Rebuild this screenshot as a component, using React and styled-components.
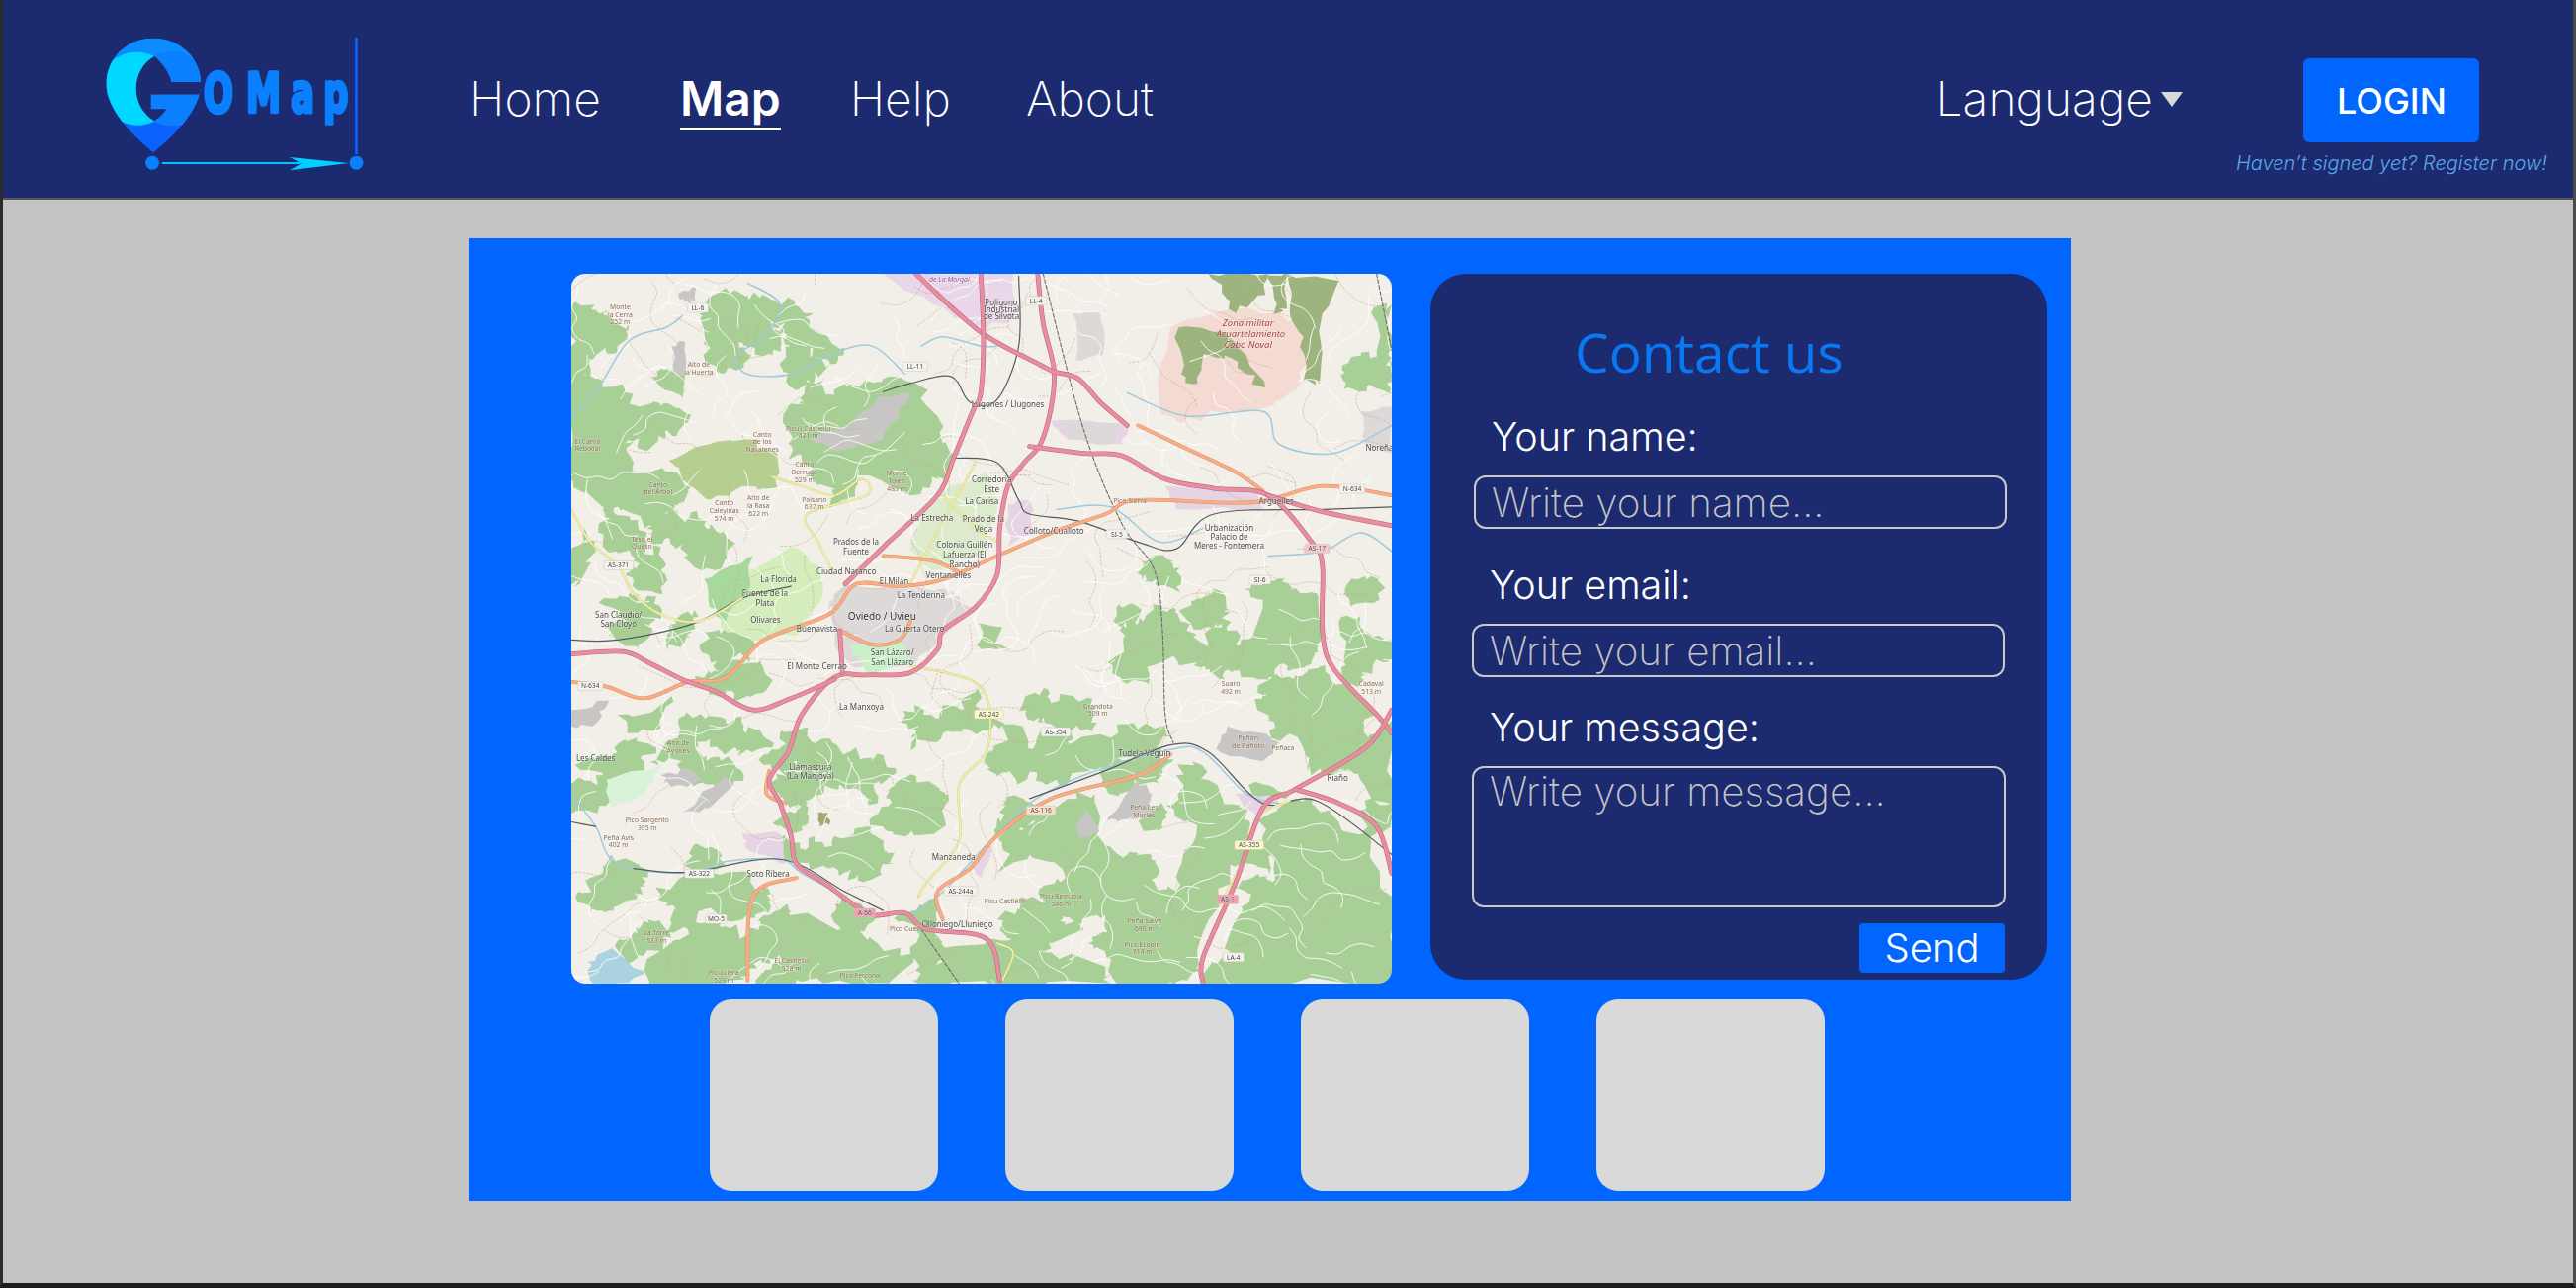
import styled, { createGlobalStyle } from 'styled-components';

const GlobalStyle = createGlobalStyle`
    html, body {
        margin: 0;
        padding: 0;
        background: #222;
    }

    * {
        box-sizing: border-box;
    }
`;

// map data is in the coordinates of a 1568 square crop, squeezed to 830x718 at draw time
const SX = 0.5486;
const SY = 0.4719;
const px = (x) => (x - 15) * SX;
const py = (y) => (y - 15) * SY;

function makeRandom(seed) {
    let s = seed;
    return () => {
        s = (s * 16807) % 2147483647;
        return s / 2147483647;
    };
}

// polygon with a rough natural edge
function rough(points, seed = 7, amount = 9) {
    const rnd = makeRandom(seed * 977 + 13);
    let d = '';
    for (let i = 0; i < points.length; i += 2) {
        const x = points[i];
        const y = points[i + 1];
        const nx = points[(i + 2) % points.length];
        const ny = points[(i + 3) % points.length];
        d += `${d ? 'L' : 'M'}${x} ${y}`;
        for (let k = 1; k < 4; k++) {
            const t = k / 4;
            d += `L${x + (nx - x) * t + (rnd() - 0.5) * amount * 2} ${y + (ny - y) * t + (rnd() - 0.5) * amount * 2}`;
        }
    }
    return d + 'Z';
}

// smooth line through the points
function smooth(p) {
    let d = `M${p[0]} ${p[1]}`;
    for (let i = 0; i < p.length - 2; i += 2) {
        const x0 = p[Math.max(i - 2, 0)];
        const y0 = p[Math.max(i - 1, 1)];
        const x1 = p[i];
        const y1 = p[i + 1];
        const x2 = p[i + 2];
        const y2 = p[i + 3];
        const x3 = p[Math.min(i + 4, p.length - 2)];
        const y3 = p[Math.min(i + 5, p.length - 1)];
        d += `C${x1 + (x2 - x0) / 6} ${y1 + (y2 - y0) / 6} ${x2 - (x3 - x1) / 6} ${y2 - (y3 - y1) / 6} ${x2} ${y2}`;
    }
    return d;
}

const GREENS = [
    [15,200,60,240,110,250,140,300,190,320,185,345,130,350,115,390,130,420,95,450,115,490,90,540,75,520,40,470,15,430],
    [40,110,60,95,90,110,120,135,100,170,60,190,15,215,15,170],
    [260,100,300,45,340,60,385,105,350,130,325,185,295,135,250,135],
    [410,170,450,165,485,215,465,235,430,265,405,225],
    [410,310,470,285,520,250,590,240,650,250,690,320,695,400,680,460,640,490,570,450,520,470,470,470,440,420,415,380],
    [120,440,190,440,210,490,180,540,150,560,110,520],
    [130,630,180,600,190,640,150,690,130,670],
    [320,780,360,790,345,850,320,830],
    [270,560,300,560,310,600,280,620],
    [15,610,40,560,60,610,30,680,15,680],
    [1490,100,1528,80,1528,220,1500,180],
    [1060,800,1110,760,1150,780,1190,830,1220,810,1260,840,1290,700,1330,720,1390,700,1400,790,1330,850,1270,880,1200,860,1130,840,1070,860],
    [1430,760,1470,750,1510,830,1480,870,1440,850],
    [1210,730,1230,740,1220,780,1200,770],
    [1300,900,1400,880,1450,900,1500,960,1440,1020,1370,1050,1320,980,1280,950],
    [765,760,790,770,825,820,790,820,770,800],
    [1020,730,1055,725,1060,780,1030,770],
    [890,930,940,920,960,970,930,1010,900,980],
    [640,1010,720,950,765,905,760,940,700,1000,650,1030],
    [790,1030,830,980,870,1040,850,1070,800,1060],
    [920,1030,1010,1010,1040,980,1090,990,1130,1000,1060,1050,980,1080,900,1090,870,1070],
    [850,1200,930,1140,980,1130,1000,1240,1040,1260,1090,1320,1130,1340,1140,1280,1170,1190,1130,1090,1160,1060,1190,1100,1240,1180,1230,1280,1190,1400,1150,1530,1020,1536,1000,1390,950,1380,920,1290,860,1260,800,1300],
    [1290,1180,1380,1150,1430,1190,1490,1230,1528,1350,1528,1536,1250,1536,1220,1460,1270,1340,1310,1290,1290,1220],
    [1400,1000,1440,1010,1450,1070,1400,1090,1370,1080],
    [1470,1030,1528,980,1528,1170,1470,1100],
    [620,1150,680,1140,710,1130,690,1210,630,1220],
    [480,1060,540,1030,570,1100,580,1150,520,1120,480,1110],
    [500,1220,560,1200,590,1240,610,1280,540,1310,510,1280],
    [450,1100,490,1090,480,1130,440,1140],
    [160,1060,210,1010,250,1030,260,1060,190,1060],
    [240,980,300,970,320,1040,270,1030],
    [60,1090,110,1040,150,1060,100,1120,60,1160],
    [50,1310,110,1290,140,1330,100,1370,50,1380],
    [170,1330,280,1300,340,1300,360,1340,330,1400,250,1380,190,1370],
    [160,1480,260,1410,320,1410,345,1520,300,1536,160,1536],
    [420,1390,540,1420,580,1450,650,1470,600,1536,480,1536,400,1510,370,1400],
    [700,1460,790,1440,900,1470,1000,1500,1010,1536,680,1536],
    [800,1400,860,1370,900,1400,960,1420,900,1450,820,1440],
    [100,960,170,950,200,920,180,990,110,1000],
    [300,860,330,890,290,910,260,880],
];

// zones where the countryside is wooded: x0, y0, x1, y1, how many small woods
const WOOD_ZONES = [
    [15,100,200,560,16],[250,40,500,240,10],[410,280,700,480,8],[100,560,300,800,10],[230,780,400,920,5],
    [15,950,350,1130,9],[15,1280,380,1536,14],[400,1020,620,1320,14],[380,1380,700,1536,8],[620,1130,720,1220,2],
    [650,940,780,1020,3],[780,1000,880,1070,2],[860,940,960,1010,2],[1040,720,1300,900,14],[1290,680,1520,1020,14],
    [1370,980,1528,1120,5],[800,1130,1528,1536,40],[880,1000,1130,1090,5],[1450,90,1528,230,2],[1060,630,1180,720,2],
];

function makeWoods() {
    const rnd = makeRandom(2024);
    const woods = [];
    WOOD_ZONES.forEach(([x0, y0, x1, y1, count]) => {
        for (let i = 0; i < count; i++) {
            const cx = x0 + rnd() * (x1 - x0);
            const cy = y0 + rnd() * (y1 - y0);
            const pts = [];
            const n = 6;
            for (let k = 0; k < n; k++) {
                const a = (k / n) * 6.283;
                const r = 16 + rnd() * 38;
                pts.push(cx + Math.cos(a) * r, cy + Math.sin(a) * r);
            }
            woods.push(pts);
        }
    });
    return woods;
}

const WOODS = makeWoods();

const PATCHES = [
    { fill: '#f3dbd4', points: [1100,300,1120,130,1240,90,1300,100,1380,120,1370,210,1340,270,1300,300,1200,310,1140,335] },
    { fill: '#9db47f', points: [1190,15,1300,15,1295,60,1240,100,1225,70] },
    { fill: '#9db47f', points: [1135,130,1220,140,1260,190,1295,260,1260,230,1220,190,1180,190,1170,250,1140,230] },
    { fill: '#9db47f', points: [1335,15,1430,30,1400,100,1395,250,1365,245,1365,150,1340,100] },
    { fill: '#9db47f', points: [1300,25,1335,15,1335,90,1310,100] },
    { fill: '#b7ce91', points: [195,415,270,380,335,370,395,400,395,475,330,470,270,500,225,460] },
    { fill: '#e9d6e8', points: [590,15,830,15,830,110,760,130,680,80] },
];

const OVERLAYS = [
    { fill: '#e6d3e3', points: [1110,470,1270,480,1290,520,1130,520] },
    { fill: '#e6d3e3', points: [900,330,1040,340,1030,380,930,370] },
    { fill: '#e6d3e3', points: [820,510,860,500,870,570,820,600] },
    { fill: '#e6d3e3', points: [750,1290,790,1240,770,1310] },
    { fill: '#e6d3e3', points: [330,1215,400,1215,410,1280,340,1250] },
    { fill: '#e6d3e3', points: [1240,1130,1320,1140,1280,1180] },
    { fill: '#ddd9d9', points: [490,720,520,680,620,690,700,690,760,730,700,790,650,850,540,860,500,810] },
    { fill: '#d5ecbb', points: [270,700,420,600,470,640,480,700,430,790,350,800,290,770] },
    { fill: '#c9f0c9', points: [530,810,620,800,650,850,560,870] },
    { fill: '#dcebcb', points: [700,480,780,440,800,520,780,610,680,650,640,610,660,540] },
    { fill: '#a8d99c', points: [260,670,310,640,350,620,340,700,300,760,270,730] },
    { fill: '#d8f3d8', points: [80,1100,180,1070,150,1130,90,1160] },
    { fill: '#ddd9d9', points: [940,100,990,95,995,190,945,200] },
    { fill: '#ddd9d9', points: [920,335,1030,335,1010,380,930,370] },
    { fill: '#ddd9d9', points: [1470,310,1528,300,1528,400,1480,380] },
    { fill: '#c8c6c4', points: [455,370,530,340,580,280,640,270,620,310,590,370,510,395] },
    { fill: '#c8c6c4', points: [200,170,225,160,225,235,205,230] },
    { fill: '#c8c6c4', points: [215,55,245,45,245,75,220,75] },
    { fill: '#c8c6c4', points: [15,950,85,930,60,980,15,985] },
    { fill: '#c8c6c4', points: [180,1090,230,1075,255,1100,200,1115] },
    { fill: '#c8c6c4', points: [220,1170,300,1090,315,1110,270,1160] },
    { fill: '#c8c6c4', points: [1205,1030,1225,985,1290,1000,1320,1020,1290,1060,1210,1040] },
    { fill: '#c8c6c4', points: [1005,1180,1060,1100,1085,1130,1085,1170,1020,1190] },
    { fill: '#c8c6c4', points: [945,1195,965,1160,990,1210,950,1225] },
    { fill: '#aad3df', points: [45,1490,90,1460,150,1510,120,1535,55,1536] },
    { fill: '#a9a67a', points: [470,1170,490,1170,490,1198,472,1198] },
];

const RIVERS = [
    [340,35,400,80,370,150,320,190,340,230,420,230,500,185,570,170,630,230],
    [15,320,60,270,120,160,190,130,220,105],
    [660,170,700,150,770,170,800,170],
    [910,520,1010,515,1100,590,1180,560],
    [1040,270,1150,320,1290,310,1320,380,1420,400,1528,340],
    [15,1130,60,1200,100,1280,230,1300,300,1275,400,1270,440,1300,510,1345],
    [1300,620,1400,610,1470,570,1528,610],
    [640,1390,700,1340,780,1240,860,1150,960,1090,1120,1035,1180,1040,1260,1130,1320,1150],
];

const MINOR_YELLOW = [
    [385,450,440,470,500,490,550,455,560,490,450,530,470,590,500,660],
    [15,520,50,590,100,640,130,700,180,745,250,760,330,710],
    [640,855,750,885,785,940,780,1040,730,1110,730,1230,670,1320,655,1350],
    [1340,1145,1280,1180,1250,1280,1210,1370],
    [700,490,760,560,800,590],
    [640,680,680,590,760,420],
    [800,1450,830,1470,810,1530],
];

const ORANGE = [
    [15,890,80,900,150,925,230,890,300,880,370,800,490,745,540,680,620,685,700,670,800,620,900,570,1000,530,1060,500,1270,505,1400,470,1528,490],
    [1060,340,1150,390,1240,440,1290,480],
    [1120,1045,1060,1090,900,1140,800,1220,750,1290,690,1340,700,1400],
    [430,1310,350,1350,340,1530],
    [380,1080,375,1130,410,1150],
    [510,780,570,810,620,800,640,760],
    [590,620,680,630,740,660],
];

const MOTORWAYS = [
    [875,15,885,120,905,220,900,300,880,380,850,420,820,470,805,560,800,660,760,730,700,780,690,820,640,870,560,875,500,880,440,960,415,1040,380,1100,400,1150,420,1220,430,1280,480,1320,540,1370,575,1390,630,1385,670,1420,780,1440,805,1530],
    [650,15,770,140,880,210,905,225,950,240,990,290,1040,340],
    [770,15,775,150,770,270,755,310,720,410,690,490,600,590,520,680],
    [860,385,960,400,1030,405,1110,455,1200,475,1300,490,1380,590,1400,640,1400,780,1420,860,1500,960,1528,1000],
    [15,830,110,825,160,850,220,885,280,910,350,950,420,925,500,885],
    [1528,950,1480,1030,1350,1120,1290,1160,1240,1320,1180,1480,1180,1536],
    [1350,1120,1430,1150,1500,1200,1528,1300],
    [1300,490,1400,525,1528,555],
    [510,780,515,870],
];

const RAILS = [
    [15,800,100,800,240,765,330,710,420,685],
    [590,268,640,250,715,235,750,290,800,285,840,170,840,20],
    [720,410,800,420,840,500,860,530,950,545,1060,590,1130,605,1200,530,1400,520,1528,515],
    [15,1190,60,1200],
    [860,1140,1000,1080,1120,1025,1190,1040,1290,1150,1390,1145,1528,1260],
    [130,1290,230,1298,400,1270,520,1340,590,1380],
];

const TRACKS = [
    [885,15,960,350,1030,550,1090,650,1105,780,1110,960,1125,1020],
    [1500,15,1528,180],
    [660,1420,730,1536],
];

const TOWNS = [
    ['Corredoria',790,455],['Este',790,477],['La Carisa',772,503],['La Estrecha',680,538],['Prado de la',775,540],['Vega',775,561],
    ['Colloto/Cualloto',905,565],['Urbanización',1228,560],['Palacio de',1228,579],['Meres - Fontemera',1228,598],['Prados de la',540,590],
    ['Fuente',540,611],['Colonia Guillén',740,595],['Lafuerza (El',740,616],['Rancho)',740,637],['Ciudad Naranco',522,653],['La Florida',397,669],
    ['El Milán',610,675],['Ventanielles',710,661],['Fuente de la',372,699],['Plata',372,720],['La Tenderina',660,704],['Olivares',373,756],
    ['Buenavista',468,775],['La Guerta Otero',648,776],['San Claudio/',102,747],['San Cloyo',102,766],['San Lázaro/',607,827],['San Llázaro',607,847],
    ['El Monte Cerrao',468,856],['La Manxoya',550,943],['Les Caldes',60,1054],['Llamascura',456,1073],['(La Manjoya)',456,1092],['Tudela Veguín',1072,1042],
    ['Riaño',1428,1095],['Soto Ribera',378,1302],['Manzaneda',720,1266],['Olloniego/Lluniego',727,1410],['Lugones / Llugones',820,295],['Noreña',1505,388],
    ['Argüelles',1315,503],['Polígono',808,77],['Industrial',808,92],['de Silvota',808,107],
];

const PEAKS = [
    ['Monte',105,87],['la Cerra',105,103],['252 m',105,119],['Alto de',250,210],['la Huerta',250,226],['Picu\'l Castiellu',452,347],['421 m',452,363],
    ['Canto',367,360],['de los',367,376],['Navalones',367,392],['Canto',175,468],['del Árbol',175,484],['Canto',445,425],['Berruga',445,441],['529 m',445,458],
    ['Monte',615,444],['Toleo',615,460],['489 m',615,476],['Paisano',463,500],['637 m',463,516],['Alto de',360,497],['la Rasa',360,513],['622 m',360,530],
    ['Canto',297,507],['Caleyinas',297,523],['574 m',297,540],['Teso el',145,584],['Queso',145,600],['Alto de',212,1022],['Ayones',212,1038],
    ['Pico Sargento',155,1187],['395 m',155,1203],['Peña Avis',102,1224],['402 m',102,1240],['La Torre',172,1428],['533 m',172,1445],['Picu Llera',296,1514],
    ['529 m',296,1530],['El Castiellu',421,1488],['528 m',421,1505],['Pico Fercona',547,1520],['Picu Castiello',815,1361],['Picu Berrubia',918,1351],
    ['546 m',918,1367],['Pico Cuelo',632,1419],['Peña Salve',1072,1403],['690 m',1072,1419],['Pico Ecobin',1068,1453],['714 m',1068,1469],['Peña Les',1071,1160],
    ['Muries',1071,1176],['Peñón',1263,1012],['de Bañoto',1263,1028],['Peñaca',1327,1032],['Suaro',1231,895],['492 m',1231,911],['Cadaval',1490,895],
    ['513 m',1490,911],['Grandota',986,943],['509 m',986,959],['Pico Sierra',1045,502],['El Canto',45,375],['Rebollal',45,391],
];

const SHIELDS = [
    ['LL-6',248,88],['LL-4',872,73],['LL-11',649,214],['AS-371',102,640],['N-634',50,899],['N-634',1455,476],['SI-5',1021,573],['SI-6',1285,671],
    ['AS-17',1390,604,'#f4c6cd'],['AS-242',785,959,'#fbf7c4'],['AS-354',908,997],['AS-116',881,1165,'#fbdcc4'],['AS-322',251,1301],['AS-244a',733,1338],
    ['A-66',556,1385,'#eea0ae'],['MO-5',282,1398],['AS-355',1265,1240,'#fbf7c4'],['AS-1',1225,1356,'#eea0ae'],['LA-4',1236,1480],
];

// white lanes and brown paths scattered over the countryside
function scatterLines(count, seed, step) {
    const rnd = makeRandom(seed);
    const lines = [];
    for (let i = 0; i < count; i++) {
        let x = 15 + rnd() * 1513;
        let y = 15 + rnd() * 1521;
        let a = rnd() * 6.28;
        const pts = [x, y];
        const n = 3 + Math.floor(rnd() * 5);
        for (let k = 0; k < n; k++) {
            a += (rnd() - 0.5) * 1.8;
            x += Math.cos(a) * step;
            y += Math.sin(a) * step;
            pts.push(x, y);
        }
        lines.push(smooth(pts));
    }
    return lines;
}

const LANES = scatterLines(280, 4242, 24);
const PATHS = scatterLines(130, 99, 30);

function MapArt() {
    return (
        <MapSvg viewBox="0 0 830 718" aria-label="Map of Oviedo">
            <rect width="830" height="718" fill="#f2efe9" />
            <g transform={`scale(${SX} ${SY}) translate(-15 -15)`}>
                {PATCHES.map((p, i) => <path key={i} d={rough(p.points, i + 1)} fill={p.fill} />)}
                {GREENS.map((g, i) => <path key={i} d={rough(g, i + 30, 13)} fill="#a8d096" />)}
                {WOODS.map((g, i) => <path key={i} d={rough(g, i + 200, 8)} fill="#a8d096" />)}
                {OVERLAYS.map((p, i) => <path key={i} d={rough(p.points, i + 70, 6)} fill={p.fill} />)}
                {PATHS.map((d, i) => <Line key={i} d={d} $color="#c9a98a" $width={0.6} $dash="2 2" />)}
                {LANES.map((d, i) => <Line key={i} d={d} $color="#ffffff" $width={0.9} />)}
                {RIVERS.map((r, i) => <Line key={i} d={smooth(r)} $color="#9fc9df" $width={1.5} />)}
                {RAILS.map((r, i) => <Line key={i} d={smooth(r)} $color="#555b60" $width={1.2} />)}
                {TRACKS.map((r, i) => <Line key={i} d={smooth(r)} $color="#6b6b6b" $width={1.1} $dash="4 2" />)}
                {MINOR_YELLOW.map((r, i) => (
                    <g key={i}>
                        <Line d={smooth(r)} $color="#c9c47f" $width={2.2} />
                        <Line d={smooth(r)} $color="#f7f5a8" $width={1.4} />
                    </g>
                ))}
                {ORANGE.map((r, i) => (
                    <g key={i}>
                        <Line d={smooth(r)} $color="#d98a5f" $width={3.8} />
                        <Line d={smooth(r)} $color="#f7ae86" $width={3} />
                    </g>
                ))}
                {MOTORWAYS.map((r, i) => (
                    <g key={i}>
                        <Line d={smooth(r)} $color="#bd6478" $width={4.8} />
                        <Line d={smooth(r)} $color="#e78fa1" $width={3.7} />
                    </g>
                ))}
            </g>
            {SHIELDS.map(([t, x, y, fill]) => {
                const w = t.length * 4.1 + 5;
                return (
                    <g key={t + x}>
                        <rect x={px(x) - w / 2} y={py(y) - 4.5} width={w} height={9} rx="1.5" fill={fill || '#f4f2ec'} stroke="#c9c5b8" strokeWidth="0.5" />
                        <MapText x={px(x)} y={py(y) + 2.3} $size={6.6} $color="#444">{t}</MapText>
                    </g>
                );
            })}
            {PEAKS.map(([t, x, y]) => <MapText key={t + x + y} x={px(x)} y={py(y) + 2} $size={6.8} $color="#8a6a52">{t}</MapText>)}
            {TOWNS.map(([t, x, y]) => <MapText key={t + x + y} x={px(x)} y={py(y) + 3} $size={8} $color="#4a4a4a">{t}</MapText>)}
            <MapText x={px(588)} y={py(750) + 3.5} $size={10} $color="#333">Oviedo / Uvieu</MapText>
            <MapText x={px(1263)} y={py(120) + 3} $size={9.5} $color="#a5423f" $italic>Zona militar</MapText>
            <MapText x={px(1263)} y={py(144) + 3} $size={9.5} $color="#a5423f" $italic>- Acuartelamiento</MapText>
            <MapText x={px(1263)} y={py(168) + 3} $size={9.5} $color="#a5423f" $italic>Cabo Noval</MapText>
            <MapText x={px(712)} y={py(28) + 2} $size={7} $color="#8a5a96" $italic>de La Morgal</MapText>
        </MapSvg>
    );
}

function Logo() {
    const pin = 'M465 465C405 415 322 335 322 255C322 178 385 117 465 117C545 117 610 178 610 255C610 335 525 415 465 465Z';

    return (
        <LogoSvg viewBox="300 100 820 430" aria-label="GoMap">
            <defs>
                <clipPath id="pin-clip"><path d={pin} /></clipPath>
            </defs>
            <path d={pin} fill="#0a63ff" />
            <g clipPath="url(#pin-clip)">
                <path d="M300 100H640V340C590 385 510 395 468 370C420 395 345 380 300 310Z" fill="#0a80ff" />
                <path d="M320 200C360 150 420 145 468 172C510 145 565 150 600 195L600 100L320 100Z" fill="#0b8dff" />
                <path d="M300 240C330 165 410 140 468 172C395 215 395 325 468 368C425 395 350 385 300 310Z" fill="#00d7ff" />
                <path d="M468 172C395 215 395 325 468 368C485 358 497 345 505 332L458 332L458 288L612 288L612 250L520 250C512 218 492 192 468 172Z" fill="#1c2a70" />
            </g>
            <LogoWord transform="scale(0.64 1)" x="966 1168 1381 1536" y="342">OMap</LogoWord>
            <rect x="1079" y="115" width="8" height="355" fill="#0a66ff" />
            <circle cx="462" cy="496" r="21" fill="#0a80ff" />
            <circle cx="1083" cy="496" r="21" fill="#0a80ff" />
            <rect x="492" y="494" width="420" height="6" fill="#00c8ff" />
            <path d="M880 479L1060 497L880 519L916 498Z" fill="#00d0ff" />
        </LogoSvg>
    );
}

export default function App() {
    return (
        <>
            <GlobalStyle />
            <Frame>
                <Header>
                    <Logo />
                    <Nav>
                        <NavLink>Home</NavLink>
                        <NavLink $active $gap={80}>Map</NavLink>
                        <NavLink $gap={70}>Help</NavLink>
                        <NavLink $gap={76}>About</NavLink>
                    </Nav>
                    <Language>
                        Language
                        <Caret />
                    </Language>
                    <Account>
                        <LoginButton>LOGIN</LoginButton>
                        <SignUp>Haven’t signed yet? Register now!</SignUp>
                    </Account>
                </Header>

                <Main>
                    <Panel>
                        <TopRow>
                            <MapCard>
                                <MapArt />
                            </MapCard>

                            <ContactCard>
                                <ContactTitle>Contact us</ContactTitle>
                                <FieldLabel $top={31} $left={62}>Your name:</FieldLabel>
                                <TextInput $left={44} placeholder="Write your name..." />
                                <FieldLabel $top={35} $left={60}>Your email:</FieldLabel>
                                <TextInput $left={42} placeholder="Write your email..." />
                                <FieldLabel $top={29} $left={60}>Your message:</FieldLabel>
                                <MessageInput placeholder="Write your message..." />
                                <SendButton>Send</SendButton>
                            </ContactCard>
                        </TopRow>

                        <Thumbs>
                            <Thumb />
                            <Thumb />
                            <Thumb />
                            <Thumb />
                        </Thumbs>
                    </Panel>
                </Main>
            </Frame>
        </>
    );
}

const Frame = styled.div`
    width: 2606px;
    height: 1303px;
    display: flex;
    flex-direction: column;
    border-left: 3px solid #2b2b2b;
    border-right: 3px solid #4a4a4a;
    border-bottom: 5px solid #1d1d1d;
    background: #c3c3c3;
    font-family: "Inter", "Liberation Sans", sans-serif;
    overflow: hidden;
`;

const Header = styled.header`
    height: 202px;
    flex-shrink: 0;
    display: flex;
    align-items: center;
    padding-left: 97px;
    background: #1c2a70;
    border-bottom: 2px solid #55565c;
`;

const LogoSvg = styled.svg`
    width: 273px;
    height: 143px;
    flex-shrink: 0;
    margin-top: 9px;
`;

const LogoWord = styled.text`
    font-family: "DejaVu Sans", sans-serif;
    font-weight: 700;
    font-size: 166px;
    fill: #0a80ff;
    stroke: #0a80ff;
    stroke-width: 11px;
    stroke-linejoin: round;
`;

const Nav = styled.nav`
    display: flex;
    align-items: center;
    margin-left: 102px;
    padding-top: 2px;
`;

const NavLink = styled.a`
    margin-left: ${(props) => props.$gap || 0}px;
    color: #ffffff;
    font-size: 48px;
    font-weight: ${(props) => (props.$active ? 600 : 200)};
    line-height: 58px;
    border-bottom: 3px solid ${(props) => (props.$active ? '#ffffff' : 'transparent')};
`;

const Language = styled.div`
    display: flex;
    align-items: center;
    gap: 8px;
    margin-left: auto;
    margin-top: -2px;
    color: #ffffff;
    font-size: 48px;
    font-weight: 200;
`;

const Caret = styled.span`
    width: 0;
    height: 0;
    margin-top: 2px;
    border-left: 11px solid transparent;
    border-right: 11px solid transparent;
    border-top: 15px solid #d9d9d9;
`;

const Account = styled.div`
    align-self: flex-start;
    display: flex;
    flex-direction: column;
    align-items: center;
    margin: 59px 26px 0 54px;
`;

const LoginButton = styled.button`
    width: 178px;
    height: 85px;
    border: none;
    border-radius: 6px;
    background: #0066ff;
    color: #ffffff;
    font-family: inherit;
    font-size: 36px;
    font-weight: 500;
`;

const SignUp = styled.a`
    margin-top: 9px;
    color: #5aa9e6;
    font-size: 20px;
    font-style: italic;
    font-weight: 300;
    white-space: nowrap;
`;

const Main = styled.main`
    flex: 1;
    padding: 39px 0 0 471px;
`;

const Panel = styled.section`
    width: 1621px;
    height: 974px;
    padding: 36px 0 0 104px;
    background: #0066ff;
`;

const TopRow = styled.div`
    display: flex;
    align-items: flex-start;
    gap: 39px;
`;

const MapCard = styled.div`
    width: 830px;
    height: 718px;
    border-radius: 14px;
    overflow: hidden;
    flex-shrink: 0;
`;

const MapSvg = styled.svg`
    display: block;
    width: 830px;
    height: 718px;
    filter: blur(0.35px);
`;

const Line = styled.path`
    fill: none;
    stroke: ${(props) => props.$color};
    stroke-width: ${(props) => props.$width}px;
    stroke-linejoin: round;
    stroke-linecap: round;
    stroke-dasharray: ${(props) => props.$dash || 'none'};
    vector-effect: non-scaling-stroke;
`;

const MapText = styled.text`
    font-family: "Noto Sans", "Open Sans", sans-serif;
    font-size: ${(props) => props.$size}px;
    font-style: ${(props) => (props.$italic ? 'italic' : 'normal')};
    fill: ${(props) => props.$color};
    text-anchor: middle;
    paint-order: stroke;
    stroke: rgba(255, 255, 255, 0.45);
    stroke-width: 1px;
`;

const ContactCard = styled.form`
    width: 624px;
    height: 714px;
    display: flex;
    flex-direction: column;
    align-items: flex-start;
    border-radius: 36px;
    background: #1c2a70;
`;

const ContactTitle = styled.h2`
    margin: 46px 0 0 146px;
    color: #0a78f0;
    font-family: "Open Sans", "Noto Sans", sans-serif;
    font-size: 55px;
    font-weight: 400;
    line-height: 66px;
`;

const FieldLabel = styled.label`
    margin: ${(props) => props.$top}px 0 0 ${(props) => props.$left}px;
    color: #ffffff;
    font-size: 39.5px;
    font-weight: 300;
    line-height: 45px;
`;

const TextInput = styled.input`
    width: 539px;
    height: 54px;
    margin: 16px 0 0 ${(props) => props.$left}px;
    padding: 0 16px;
    border: 2px solid #c9c9c9;
    border-radius: 12px;
    background: transparent;
    color: #ffffff;
    font-family: inherit;
    font-size: 40.4px;
    font-weight: 200;
    outline: none;

    &::placeholder {
        color: #c4c4c4;
        opacity: 1;
    }
`;

const MessageInput = styled.textarea`
    width: 540px;
    height: 143px;
    margin: 16px 0 0 42px;
    padding: 0 16px;
    border: 2px solid #c9c9c9;
    border-radius: 12px;
    background: transparent;
    color: #ffffff;
    font-family: inherit;
    font-size: 40.4px;
    font-weight: 200;
    line-height: 48px;
    resize: none;
    outline: none;

    &::placeholder {
        color: #c4c4c4;
        opacity: 1;
    }
`;

const SendButton = styled.button`
    align-self: flex-end;
    width: 147px;
    height: 50px;
    margin: 16px 43px 0 0;
    border: none;
    border-radius: 4px;
    background: #0066ff;
    color: #ffffff;
    font-family: inherit;
    font-size: 40px;
    font-weight: 300;
    line-height: 1;
`;

const Thumbs = styled.div`
    display: flex;
    gap: 68px;
    margin: 16px 0 0 140px;
`;

const Thumb = styled.div`
    width: 231px;
    height: 194px;
    border-radius: 22px;
    background: #d9d9d9;
`;
